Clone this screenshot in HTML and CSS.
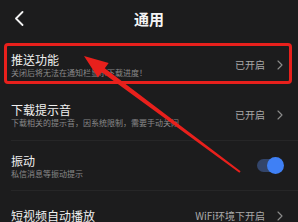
FILE: index.html
```html
<!DOCTYPE html>
<html lang="zh">
<head>
<meta charset="utf-8">
<link rel="stylesheet" href="styles.css">
</head>
<body>
<div class="page">
  <header class="header">
    <svg class="back" width="10" height="15" viewBox="0 0 10 15"><path d="M8.5 1 L2 7.5 L8.5 14" fill="none" stroke="#f2f2f2" stroke-width="1.8" stroke-linecap="round" stroke-linejoin="round"/></svg>
    <div class="title">通用</div>
  </header>
  <div class="list">
    <div class="row">
      <div class="texts">
        <div class="name">推送功能</div>
        <div class="desc">关闭后将无法在通知栏显示下载进度！</div>
      </div>
      <div class="right"><span class="value">已开启</span><svg class="chev" width="6" height="10" viewBox="0 0 6 10"><path d="M1 1 L5 5 L1 9" fill="none" stroke="#8c8c8c" stroke-width="1.1" stroke-linecap="round" stroke-linejoin="round"/></svg></div>
    </div>
    <div class="row">
      <div class="texts">
        <div class="name">下载提示音</div>
        <div class="desc">下载相关的提示音，因系统限制，需要手动关闭</div>
      </div>
      <div class="right"><span class="value">已开启</span><svg class="chev" width="6" height="10" viewBox="0 0 6 10"><path d="M1 1 L5 5 L1 9" fill="none" stroke="#8c8c8c" stroke-width="1.1" stroke-linecap="round" stroke-linejoin="round"/></svg></div>
    </div>
    <div class="row divided">
      <div class="texts">
        <div class="name">振动</div>
        <div class="desc">私信消息等振动提示</div>
      </div>
      <div class="right"><div class="toggle"><div class="knob"></div></div></div>
    </div>
    <div class="row divided">
      <div class="texts">
        <div class="name">短视频自动播放</div>
      </div>
      <div class="right"><span class="value">WiFi环境下开启</span><svg class="chev" width="6" height="10" viewBox="0 0 6 10"><path d="M1 1 L5 5 L1 9" fill="none" stroke="#8c8c8c" stroke-width="1.1" stroke-linecap="round" stroke-linejoin="round"/></svg></div>
    </div>
  </div>
  <div class="highlight"></div>
  <svg class="arrow" width="298" height="222" viewBox="0 0 298 222">
    <polygon fill="#e8201c" points="84,56 108.7,63.1 104.8,68.3 240.6,171.2 239.4,172.8 101.8,72.3 97.9,77.5"/>
  </svg>
</div>
</body>
</html>
```
FILE: styles.css
```css
* { box-sizing: border-box; }
html, body { margin: 0; padding: 0; }
body {
  background: #1c1c1d;
  font-family: "Noto Sans CJK SC", "Noto Sans", sans-serif;
  width: 298px;
  height: 222px;
  overflow: hidden;
}
.page { position: relative; width: 298px; height: 222px; overflow: hidden; }
.header {
  height: 40px;
  display: flex;
  align-items: center;
  justify-content: center;
  position: relative;
  padding-bottom: 2px;
}
.back { position: absolute; left: 14px; top: 11px; }
.title { color: #f4f4f4; font-size: 15px; font-weight: 700; line-height: 20px; }
.list { display: flex; flex-direction: column; }
.row {
  height: 50px;
  margin-left: 11px;
  padding-right: 15px;
  display: flex;
  align-items: center;
  justify-content: space-between;
}
.divided { border-top: 1px solid #262627; }
.texts { display: flex; flex-direction: column; }
.name { color: #f0f0f0; font-size: 12px; line-height: 15px; }
.desc { color: #8a8a8a; font-size: 8px; line-height: 11px; white-space: nowrap; }
.right { display: flex; align-items: center; }
.value { color: #a9a9a9; font-size: 10px; line-height: 14px; }
.chev { margin-left: 12px; }
.toggle {
  width: 26px;
  height: 13px;
  border-radius: 7px;
  background: #33456a;
  position: relative;
}
.knob {
  position: absolute;
  right: -1px;
  top: -2px;
  width: 17px;
  height: 17px;
  border-radius: 50%;
  background: #3f80f5;
}
.highlight {
  position: absolute;
  left: 4px;
  top: 43px;
  width: 288px;
  height: 41px;
  border: 3px solid #e8201c;
  border-radius: 4px;
}
.arrow { position: absolute; left: 0; top: 0; }
```
